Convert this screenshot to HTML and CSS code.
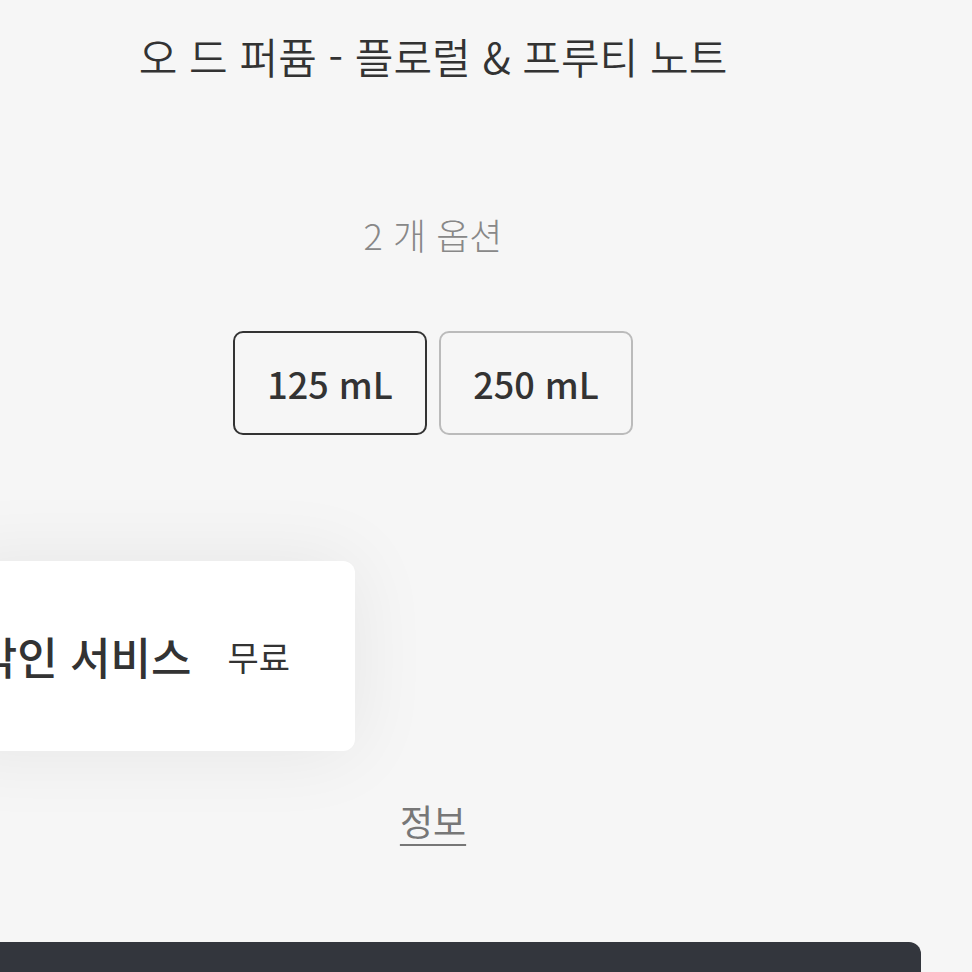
FILE: index.html
```html
<!DOCTYPE html>
<html lang="ko">

<head>
    <meta charset="UTF-8">
    <meta name="viewport" content="width=device-width, initial-scale=1.0">
    <title>오 드 퍼퓸</title>
    <link rel="stylesheet" href="styles.css">
</head>

<body>
    <div class="page">
        <!-- 제품 설명 -->
        <h1 class="subtitle">오 드 퍼퓸 - 플로럴 &amp; 프루티 노트</h1>

        <!-- 용량 옵션 -->
        <p class="option-count">2 개 옵션</p>
        <div class="sizes">
            <button class="size selected">125 mL</button>
            <button class="size">250 mL</button>
        </div>

        <!-- 각인 서비스 카드 -->
        <div class="engrave-card">
            <span class="engrave-name">각인 서비스</span>
            <span class="engrave-price">무료</span>
        </div>

        <a class="info-link" href="#">정보</a>

        <div class="cart-bar"></div>
    </div>
</body>

</html>
```

FILE: styles.css
```css
body {
    margin: 0;
    background-color: #f6f6f6;
    color: #333;
    font-family: "Noto Sans CJK KR", "Noto Sans", sans-serif;
    overflow: hidden;
    height: 972px;
}

.page {
    width: 976px;
    margin-left: -55px;
    display: flex;
    flex-direction: column;
    align-items: center;
}

.subtitle {
    margin: 28px 0 0;
    font-size: 42px;
    font-weight: 350;
    line-height: 56px;
    color: #333;
}

.option-count {
    margin: 128px 0 0;
    font-size: 36px;
    font-weight: 300;
    line-height: 44px;
    color: #888;
}

.sizes {
    display: flex;
    gap: 12px;
    margin-top: 75px;
}

.size {
    width: 194px;
    height: 104px;
    box-sizing: border-box;
    background-color: transparent;
    border: 2px solid #bbb;
    border-radius: 10px;
    font-family: inherit;
    font-size: 36px;
    font-weight: 500;
    color: #333;
}

.size.selected {
    border-color: #333;
}

.engrave-card {
    align-self: flex-start;
    width: 410px;
    height: 190px;
    margin-top: 126px;
    box-sizing: border-box;
    padding-right: 65px;
    display: flex;
    align-items: center;
    justify-content: flex-end;
    gap: 36px;
    background-color: #fff;
    border-radius: 12px;
    box-shadow: 0 0 80px rgba(0, 0, 0, 0.07);
}

.engrave-name {
    font-size: 44px;
    font-weight: 500;
    white-space: nowrap;
}

.engrave-price {
    font-size: 34px;
}

.info-link {
    margin-top: 44px;
    font-size: 36px;
    line-height: 50px;
    color: #777;
    text-decoration: underline;
    text-underline-offset: 8px;
    text-decoration-thickness: 2px;
}

.cart-bar {
    width: 976px;
    height: 30px;
    margin-top: 97px;
    background-color: #33363d;
    border-radius: 12px 12px 0 0;
}
```
